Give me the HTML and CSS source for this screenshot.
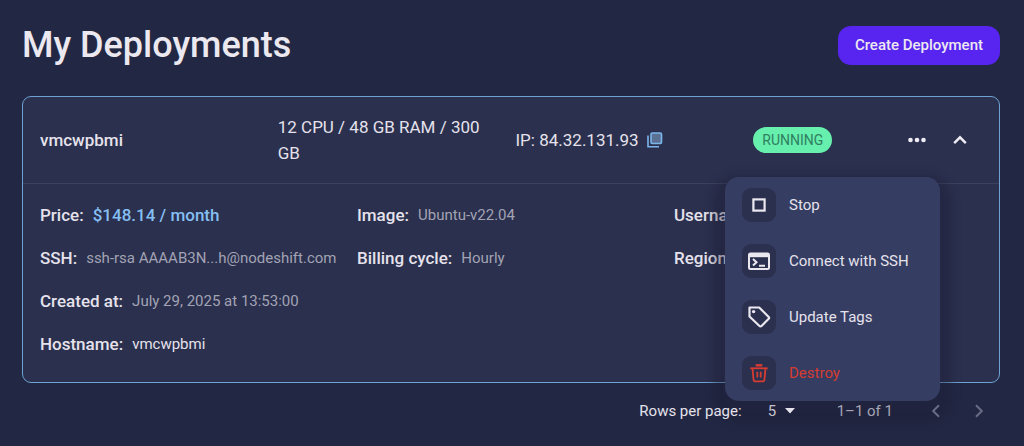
FILE: index.html
```html
<!DOCTYPE html>
<html lang="en">
<head>
<meta charset="utf-8">
<meta name="viewport" content="width=device-width, initial-scale=1">
<title>My Deployments</title>
<link rel="stylesheet" href="styles.css">
</head>
<body>
<main class="page">
  <header class="page-header">
    <h1 class="page-title">My Deployments</h1>
    <button class="create-button" type="button">Create Deployment</button>
  </header>

  <section class="card" aria-label="vmcwpbmi">
    <div class="summary">
      <div class="summary-name">vmcwpbmi</div>
      <div class="summary-specs">12 CPU / 48 GB RAM / 300 GB</div>
      <div class="summary-ip">
        <span>IP: 84.32.131.93</span>
        <button class="icon-button copy-button" type="button" aria-label="Copy IP">
          <svg width="16" height="16" viewBox="0 0 16 16" fill="none" stroke="#7cb5ea" stroke-width="1.6"><rect x="4" y="1" width="10.500" height="10.500" rx="1.2" fill="#5a7194"/><path d="M1 3.500v11.300h11"/></svg>
        </button>
      </div>
      <div class="summary-status">
        <span class="badge">RUNNING</span>
        <div class="actions">
          <div class="menu-anchor">
            <button class="icon-button" type="button" aria-label="More actions" aria-expanded="true">
              <svg width="20" height="20" viewBox="0 0 20 20" fill="#f0ecf4"><circle cx="3.5" cy="10" r="2.3"/><circle cx="10" cy="10" r="2.3"/><circle cx="16.5" cy="10" r="2.3"/></svg>
            </button>
            <div class="menu" role="menu">
              <button class="menu-item" type="button" role="menuitem">
                <span class="menu-icon"><svg width="24" height="24" viewBox="0 0 24 24" fill="none" stroke="#ece8f0" stroke-width="2.2"><rect x="6.4" y="6.4" width="11.2" height="11.2"/></svg></span>
                Stop
              </button>
              <button class="menu-item" type="button" role="menuitem">
                <span class="menu-icon"><svg width="24" height="24" viewBox="0 0 24 24" fill="none" stroke="#ece8f0" stroke-width="2"><rect x="2" y="4.5" width="20" height="15.5" rx="1.5"/><path d="M2 6.2h20" stroke-width="4"/><path d="M6 10l3.500 3.300L6 16.600M12 16.800h6"/></svg></span>
                Connect with SSH
              </button>
              <button class="menu-item" type="button" role="menuitem">
                <span class="menu-icon"><svg width="24" height="24" viewBox="0 0 24 24" fill="none" stroke="#ece8f0" stroke-width="2.2" stroke-linejoin="round"><path d="M2.5 2.5h9.700L21.700 12q.8.900 0 1.800L14.500 21q-1 1-2 0L2.500 11.500z"/><circle cx="6.6" cy="6.6" r="1.7" fill="#ece8f0" stroke="none"/></svg></span>
                Update Tags
              </button>
              <button class="menu-item menu-item-danger" type="button" role="menuitem">
                <span class="menu-icon"><svg width="24" height="24" viewBox="0 0 24 24" fill="none" stroke="#d63c31" stroke-width="1.8"><path d="M3.200 7.300h17.600"/><path d="M8.700 4.300h6.600" stroke-width="2.4"/><path d="M5.500 7.300l1 11q.2 2 2 2h7q1.800 0 2-2l1-11M10.300 10.800v5.700M13.700 10.800v5.700"/></svg></span>
                Destroy
              </button>
            </div>
          </div>
          <button class="icon-button" type="button" aria-label="Collapse details" aria-expanded="true">
            <svg width="20" height="20" viewBox="0 0 20 20" fill="none" stroke="#f0ecf4" stroke-width="2.4"><path d="M4.200 13.200L10 7.300l5.800 5.900"/></svg>
          </button>
        </div>
      </div>
    </div>

    <div class="details">
      <dl class="detail-list">
        <div class="detail"><dt>Price:</dt><dd class="price">$148.14 / month</dd></div>
        <div class="detail"><dt>SSH:</dt><dd>ssh-rsa AAAAB3N...h@nodeshift.com</dd></div>
        <div class="detail"><dt>Created at:</dt><dd>July 29, 2025 at 13:53:00</dd></div>
        <div class="detail"><dt>Hostname:</dt><dd class="bright">vmcwpbmi</dd></div>
      </dl>
      <dl class="detail-list">
        <div class="detail"><dt>Image:</dt><dd>Ubuntu-v22.04</dd></div>
        <div class="detail"><dt>Billing cycle:</dt><dd>Hourly</dd></div>
      </dl>
      <dl class="detail-list">
        <div class="detail"><dt>Username:</dt></div>
        <div class="detail"><dt>Region:</dt></div>
      </dl>
    </div>
  </section>

  <footer class="pagination">
    <label for="rows">Rows per page:</label>
    <div class="rows-field">
      <select class="rows-select" id="rows"><option>5</option><option>10</option><option>25</option></select>
      <svg class="rows-arrow" width="10" height="6" viewBox="0 0 10 6" fill="#e6e2ec" aria-hidden="true"><path d="M0 0h10L5 5.500z"/></svg>
    </div>
    <span class="page-range">1–1 of 1</span>
    <div class="page-buttons">
      <button class="icon-button" type="button" aria-label="Previous page" disabled><svg width="20" height="20" viewBox="0 0 20 20" fill="none" stroke="currentColor" stroke-width="2"><path d="M13 4.300L7.200 10l5.800 5.700"/></svg></button>
      <button class="icon-button" type="button" aria-label="Next page" disabled><svg width="20" height="20" viewBox="0 0 20 20" fill="none" stroke="currentColor" stroke-width="2"><path d="M7 4.300l5.800 5.700L7 15.700"/></svg></button>
    </div>
  </footer>
</main>
</body>
</html>
```

FILE: styles.css
```css
* { box-sizing: border-box; }

body {
  margin: 0;
  background: #222844;
  color: #e6e2ec;
  font-family: Roboto, "Liberation Sans", sans-serif;
  font-size: 17px;
  line-height: 26px;
}

button, select { font: inherit; color: inherit; }
button { cursor: pointer; }
dl, dd { margin: 0; }
svg { display: block; }

.page { padding: 20px 24px 16px 22px; }

.page-header {
  display: flex;
  align-items: center;
  justify-content: space-between;
  height: 50px;
}

.page-title {
  margin: 0;
  color: #ece8f0;
  font-size: 36px;
  font-weight: 500;
  line-height: 50px;
}

.create-button {
  height: 39px;
  padding: 0 17px;
  border: 0;
  border-radius: 13px;
  background: #5724f0;
  color: #ece8f0;
  font-size: 15px;
  font-weight: 500;
}

.card {
  margin-top: 26px;
  border: 1px solid #6ea2d2;
  border-radius: 9px;
  background: #2a304e;
}

.summary {
  display: grid;
  grid-template-columns: repeat(4, 1fr);
  align-items: center;
  min-height: 87px;
  padding: 0 8px 0 17px;
  border-bottom: 1px solid #3c415c;
}

.summary-name { font-weight: 500; }
.summary-specs { padding-right: 24px; }

.summary-ip {
  display: flex;
  align-items: center;
  gap: 8px;
}

.summary-status {
  display: flex;
  align-items: center;
  justify-content: space-between;
  padding-right: 21px;
}

.badge {
  height: 26px;
  padding: 0 9px;
  border-radius: 13px;
  background: #67efad;
  color: #2f8061;
  font-size: 14px;
}

.actions {
  display: flex;
  align-items: center;
  gap: 23px;
}

.icon-button {
  display: block;
  padding: 0;
  border: 0;
  background: none;
}

.menu-anchor { position: relative; }

.menu {
  position: absolute;
  top: 47px;
  right: -13px;
  z-index: 1;
  width: 215px;
  border-radius: 14px;
  background: #353d63;
  box-shadow: 0 10px 8px 12px rgba(28, 26, 50, 0.35);
}

.menu-item {
  display: flex;
  align-items: center;
  gap: 13px;
  width: 100%;
  height: 56px;
  padding: 0 17px;
  border: 0;
  background: none;
  font-size: 15px;
  text-align: left;
}

.menu-item-danger { color: #d63c31; }

.menu-icon {
  display: grid;
  place-items: center;
  width: 34px;
  height: 34px;
  border-radius: 9px;
  background: #2a304e;
}

.details {
  display: grid;
  grid-template-columns: repeat(3, 1fr);
  padding: 18px 8px 25px 17px;
}

.detail-list {
  display: flex;
  flex-direction: column;
  gap: 17px;
}

.detail {
  display: flex;
  gap: 9px;
  white-space: nowrap;
}

.detail dt { font-weight: 500; }
.detail dd { color: #a3a3b4; font-size: 15px; }
.detail .price { color: #86bff2; font-size: 17px; font-weight: 500; }
.detail .bright { color: #e6e2ec; }

.pagination {
  position: relative;
  z-index: 2;
  display: flex;
  align-items: center;
  justify-content: flex-end;
  margin-top: 15px;
  padding-right: 11px;
  font-size: 15px;
}

.rows-field {
  display: grid;
  align-items: center;
  margin: 0 42px 0 26px;
}

.rows-select {
  grid-area: 1 / 1;
  width: 27px;
  padding: 0;
  border: 0;
  appearance: none;
  background: none;
  color: #c4c2ce;
}

.rows-select option { background: #353d63; }

.rows-arrow {
  grid-area: 1 / 1;
  justify-self: end;
  pointer-events: none;
}

.page-range { color: #a5a4b4; }

.page-buttons {
  display: flex;
  gap: 23px;
  margin-left: 33px;
  color: #6a6c86;
}

.page-buttons .icon-button { color: inherit; }
```
